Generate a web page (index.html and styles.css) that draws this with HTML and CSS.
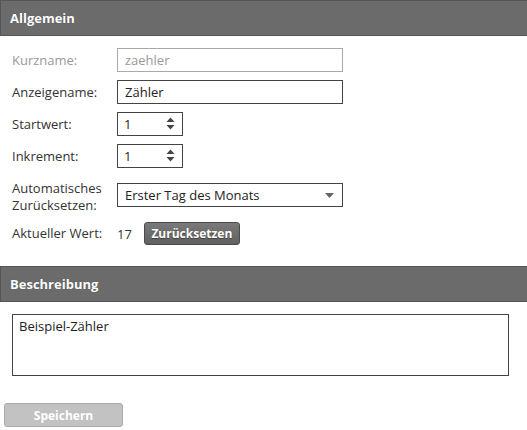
FILE: index.html
```
<!DOCTYPE html>
<html lang="de">
<head>
<meta charset="utf-8">
<title>Zähler</title>
<link rel="stylesheet" href="styles.css">
</head>
<body>
<div class="page">
  <div class="section-head">Allgemein</div>
  <div class="form">
    <div class="label muted">Kurzname:</div>
    <div class="field wide disabled">zaehler</div>

    <div class="label">Anzeigename:</div>
    <div class="field wide">Zähler</div>

    <div class="label">Startwert:</div>
    <div class="field num">1
      <svg class="spin" width="9" height="14" viewBox="0 0 9 14"><path d="M4.5 0.5 L8.5 5 L0.5 5 Z" fill="#444"/><path d="M0.5 8 L8.5 8 L4.5 12.5 Z" fill="#444"/></svg>
    </div>

    <div class="label">Inkrement:</div>
    <div class="field num">1
      <svg class="spin" width="9" height="14" viewBox="0 0 9 14"><path d="M4.5 0.5 L8.5 5 L0.5 5 Z" fill="#444"/><path d="M0.5 8 L8.5 8 L4.5 12.5 Z" fill="#444"/></svg>
    </div>

    <div class="label two">Automatisches<br>Zurücksetzen:</div>
    <div class="field wide select">Erster Tag des Monats
      <svg class="caret" width="9" height="5" viewBox="0 0 9 5"><path d="M0 0 L9 0 L4.5 5 Z" fill="#666"/></svg>
    </div>

    <div class="label">Aktueller Wert:</div>
    <div class="value-row"><span class="value">17</span><button class="btn dark">Zurücksetzen</button></div>
  </div>

  <div class="section-head">Beschreibung</div>
  <div class="desc">
    <div class="textarea">Beispiel-Zähler</div>
  </div>
  <div class="footer">
    <button class="btn light">Speichern</button>
  </div>
</div>
</body>
</html>
```
FILE: styles.css
```
html, body {
  margin: 0;
  padding: 0;
  background: #fff;
}
body {
  font-family: "Open Sans", "Liberation Sans", sans-serif;
  font-size: 13px;
  color: #333;
}
.page {
  width: 527px;
}
.section-head {
  height: 34px;
  background: #6b6b6b;
  border: 1px solid #555;
  border-right: none;
  color: #fff;
  font-weight: bold;
  font-size: 13px;
  line-height: 34px;
  padding-left: 9px;
  text-shadow: 0 0 1px rgba(0,0,0,0.3);
}
.form {
  display: grid;
  grid-template-columns: 105px auto;
  row-gap: 8px;
  padding: 12px 0 21px 12px;
  align-items: center;
}
.label {
  color: #333;
  line-height: 17px;
}
.label.two { padding-top: 4px; }
.label.muted { color: #999; }
.field {
  box-sizing: border-box;
  height: 24px;
  border: 1px solid #444;
  line-height: 22px;
  padding-left: 7px;
  color: #222;
  position: relative;
  background: #fff;
}
.field.wide { width: 226px; }
.field.disabled { border-color: #aaa; color: #999; }
.field.num { width: 66px; padding-left: 6px; }
.spin {
  position: absolute;
  right: 7px;
  top: 4px;
}
.caret {
  position: absolute;
  right: 8px;
  top: 9px;
}
.value-row {
  display: flex;
  align-items: center;
  gap: 12px;
}
.value { color: #333; }
.btn {
  font-family: "Open Sans", "Liberation Sans", sans-serif;
  font-weight: bold;
  font-size: 12px;
  color: #fff;
  border-radius: 3px;
  height: 23px;
  padding: 0;
  cursor: pointer;
}
.btn.dark {
  width: 96px;
  background: linear-gradient(#7a7a7a, #606060);
  border: 1px solid #4a4a4a;
  text-shadow: 0 1px 1px rgba(0,0,0,0.4);
}
.btn.light {
  width: 119px;
  height: 24px;
  background: #c2c2c2;
  border: 1px solid #aaa;
}
.desc {
  padding: 12px 18px 27px 12px;
}
.textarea {
  box-sizing: border-box;
  height: 62px;
  border: 1px solid #444;
  padding: 2px 6px;
  color: #222;
  line-height: 18px;
}
.footer {
  padding-left: 4px;
}
```
